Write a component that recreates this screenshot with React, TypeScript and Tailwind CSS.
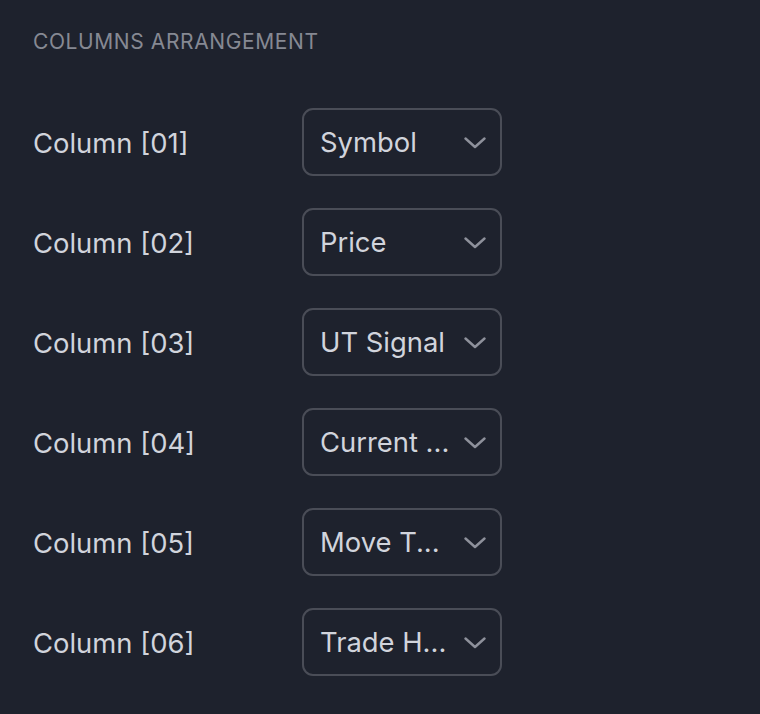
import React from "react";

const rows = [
  { label: "Column [01]", value: "Symbol" },
  { label: "Column [02]", value: "Price" },
  { label: "Column [03]", value: "UT Signal" },
  { label: "Column [04]", value: "Current ..." },
  { label: "Column [05]", value: "Move T..." },
  { label: "Column [06]", value: "Trade H..." },
];

function Chevron() {
  return (
    <svg width="22" height="12" viewBox="0 0 22 12" fill="none" className="shrink-0 mt-[3px]">
      <path d="M1.5 1.5 L11 10 L20.5 1.5" stroke="#8e919b" strokeWidth="2.4" strokeLinecap="round" strokeLinejoin="round" />
    </svg>
  );
}

export default function App() {
  return (
    <div
      className="w-[760px] h-[714px] bg-[#1e222d] pl-[33px] overflow-hidden"
      style={{ fontFamily: "Inter, 'Noto Sans', sans-serif" }}
    >
      <div className="pt-[28px] h-[93px]">
        <div className="text-[21px] leading-[28px] tracking-[0.6px] text-[#868993]">COLUMNS ARRANGEMENT</div>
      </div>
      {rows.map((r) => (
        <div key={r.label} className="h-[100px] flex items-start">
          <div className="w-[269px] h-[100px] flex items-center pt-[1px] text-[27.4px] text-[#d1d4dc] whitespace-nowrap">{r.label}</div>
          <div className="mt-[15px] w-[200px] h-[67.5px] rounded-[11px] border-2 border-[#4a4d57] flex items-center pl-[16px] pr-[14px] gap-[8px]">
            <div className="flex-1 min-w-0 whitespace-nowrap text-[27.4px] text-[#d1d4dc] pt-[2px]">{r.value}</div>
            <Chevron />
          </div>
        </div>
      ))}
    </div>
  );
}
